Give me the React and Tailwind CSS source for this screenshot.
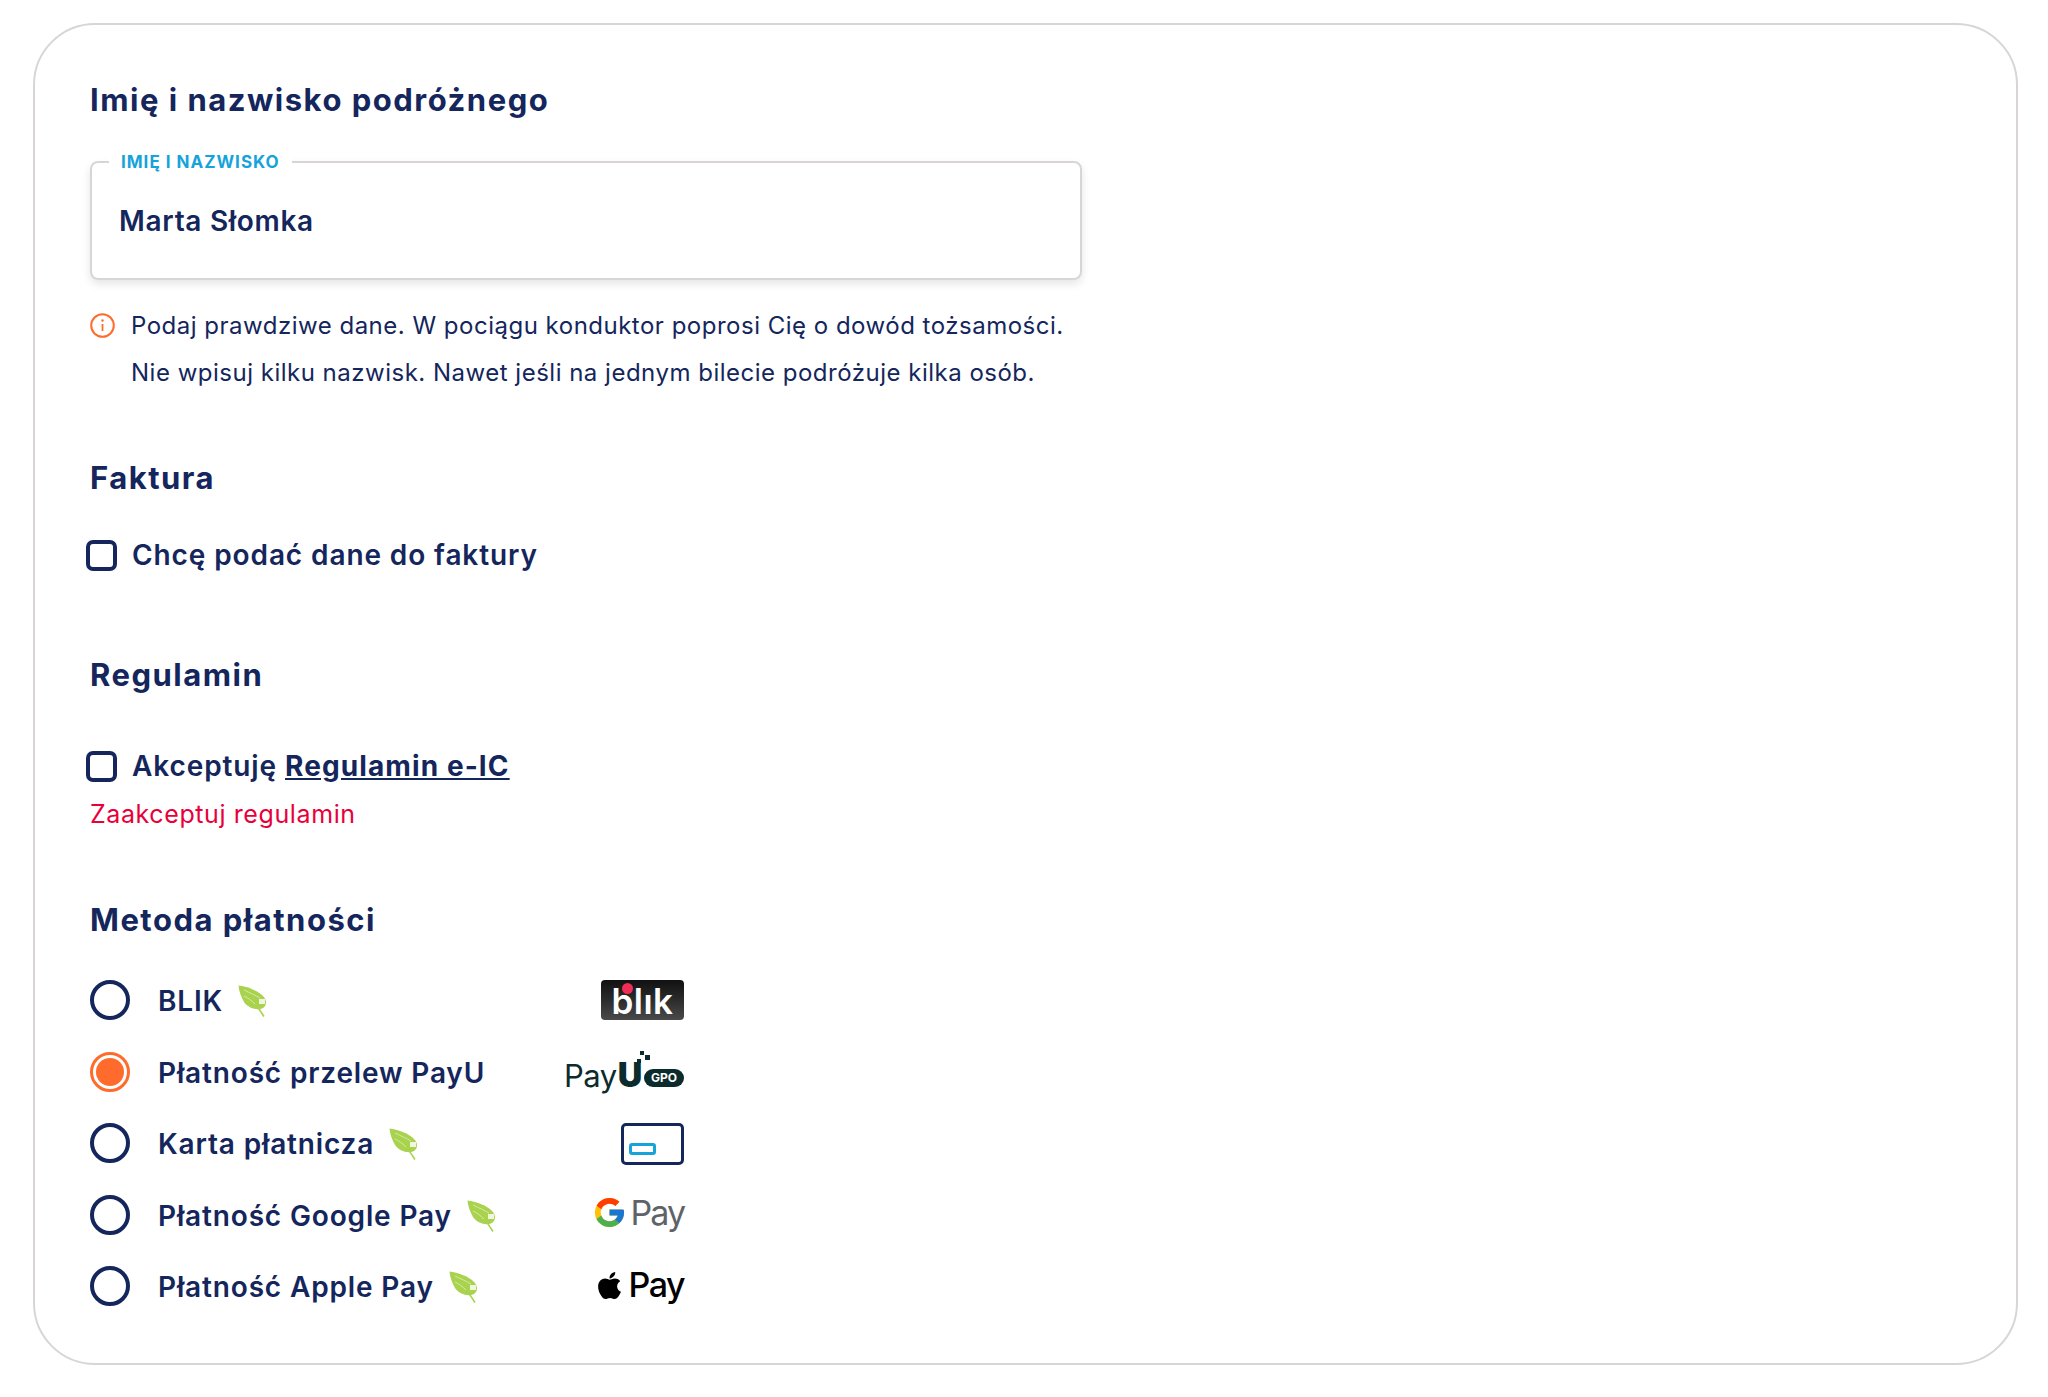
import React from "react";
import { FcGoogle } from "react-icons/fc";
import { FaApple } from "react-icons/fa";

const Leaf = () => (
  <svg width="29" height="32" viewBox="0 0 29 32" className="shrink-0">
    <path d="M0.5 0.5 C9 1.5 19 5 25 11 C29 15 29 20 25 23 C19 26 10 23 6 17 C3 12 1 6 0.5 0.5Z" fill="#a9d24f" />
    <path d="M2 2 C9 9 17 17 26 31.5" fill="none" stroke="#a9d24f" strokeWidth="1.6" />
    <path d="M6 5 C12 8 17 10 22 13 M6 11 C10 13 13 15 17 19" fill="none" stroke="#d6e99f" strokeWidth="1" />
    <path d="M21 14 h6 v5 h-6z" fill="#f1f7df" />
  </svg>
);

const InfoIcon = () => (
  <svg width="25" height="25" viewBox="0 0 25 25" className="shrink-0 text-[#ff6b2c]">
    <circle cx="12.5" cy="12.5" r="11.3" fill="none" stroke="currentColor" strokeWidth="2" />
    <path d="M12.5 11v7" stroke="currentColor" strokeWidth="1.8" />
    <circle cx="12.5" cy="7.5" r="1.2" fill="currentColor" />
  </svg>
);

const Checkbox = () => (
  <span className="w-[31px] h-[31px] border-4 border-[#14265c] rounded-[7px] shrink-0" />
);

const BlikLogo = () => (
  <div className="relative w-[83px] h-[40px] rounded-[4px] bg-gradient-to-b from-[#111111] to-[#4a4a4a] flex items-center justify-center">
    <span className="font-['Inter',sans-serif] text-[35px] leading-[38px] font-semibold text-white tracking-[0.5px] translate-y-[1px]">blık</span>
    <span className="absolute left-[21px] top-[3px] w-[11px] h-[11px] rounded-full bg-[#ee2e56]" />
  </div>
);

const PayuLogo = () => (
  <div className="relative w-[122px] h-[44px] flex items-end font-['Inter',sans-serif] text-[#0c2b2c]">
    <span className="ml-[2px] text-[31px] leading-[36px] font-normal tracking-[-0.5px]">Pay</span>
    <span className="text-[34px] leading-[38px] font-black ml-[1px]">U</span>
    <span className="absolute right-0 bottom-[7px] w-[40px] h-[18px] rounded-full bg-[#0c2b2c] text-white text-[12px] leading-[18px] font-bold text-center">GPO</span>
    <span className="absolute left-[78px] top-[1px] w-[4px] h-[4px] bg-[#0c2b2c]" />
    <span className="absolute left-[83px] top-[5px] w-[5px] h-[5px] bg-[#0c2b2c]" />
    <span className="absolute left-[75px] top-[9px] w-[4px] h-[4px] bg-[#0c2b2c]" />
  </div>
);

const CardLogo = () => (
  <div className="w-[63px] h-[42px] border-[3px] border-[#14265c] rounded-[5px] flex items-end pl-[5px] pb-[7px] translate-y-[1px]">
    <span className="w-[27px] h-[12px] border-[3px] border-[#16a3dc] rounded-[3px]" />
  </div>
);

const GooglePayLogo = () => (
  <div className="flex items-center gap-[4px] font-['Inter',sans-serif] -translate-y-[2px]">
    <FcGoogle size={35} />
    <span className="text-[34px] leading-[36px] tracking-[-2px] text-[#5f6368]">Pay</span>
  </div>
);

const ApplePayLogo = () => (
  <div className="flex items-center gap-[4px] font-['Inter',sans-serif] text-black -translate-y-[1px]">
    <FaApple size={31} />
    <span className="text-[34px] leading-[36px] font-medium tracking-[-1.5px]">Pay</span>
  </div>
);

const methods = [
  { name: "BLIK", leaf: true, logo: <BlikLogo /> },
  { name: "Płatność przelew PayU", selected: true, logo: <PayuLogo /> },
  { name: "Karta płatnicza", leaf: true, logo: <CardLogo /> },
  { name: "Płatność Google Pay", leaf: true, logo: <GooglePayLogo /> },
  { name: "Płatność Apple Pay", leaf: true, logo: <ApplePayLogo /> },
];

const Heading = ({ className, children }) => (
  <h2 className={`text-[31px] leading-[40px] font-bold text-[#14265c] tracking-[1.5px] ${className}`}>{children}</h2>
);

export default function App() {
  return (
    <div className="min-h-[1397px] bg-white pt-[23px] pl-[33px] font-['Inter',sans-serif] text-[#14265c]">
      <div className="w-[1985px] h-[1342px] border-2 border-[#d9d5d6] rounded-[62px] pt-[55px] pl-[55px]">
        <Heading>Imię i nazwisko podróżnego</Heading>

        {/* Name input */}
        <div className="relative mt-[41px] w-[992px] h-[119px] border-2 border-[#d9d5d6] rounded-[8px] shadow-[0_4px_8px_rgba(0,0,0,0.1)] flex items-center pl-[27px]">
          <span className="absolute left-[17px] -top-[12px] bg-white px-[12px] text-[17px] leading-[22px] font-bold tracking-[1px] text-[#16a3dc]">
            IMIĘ I NAZWISKO
          </span>
          <span className="text-[28px] leading-[36px] font-semibold tracking-[0.7px]">Marta Słomka</span>
        </div>

        {/* Info */}
        <div className="mt-[22px] w-[1040px] text-[24px] leading-[47px] tracking-[0.5px]">
          <div className="flex items-center gap-[16px]">
            <InfoIcon />
            <span>Podaj prawdziwe dane. W pociągu konduktor poprosi Cię o dowód tożsamości.</span>
          </div>
          <div className="pl-[41px]">Nie wpisuj kilku nazwisk. Nawet jeśli na jednym bilecie podróżuje kilka osób.</div>
        </div>

        <Heading className="mt-[62px]">Faktura</Heading>
        <label className="mt-[37px] -ml-[4px] h-[40px] flex items-center gap-[15px] text-[28px] font-semibold tracking-[0.9px]">
          <Checkbox />
          <span>Chcę podać dane do faktury</span>
        </label>

        <Heading className="mt-[80px]">Regulamin</Heading>
        <label className="mt-[51px] -ml-[4px] h-[40px] flex items-center gap-[15px] text-[28px] font-semibold tracking-[0.9px]">
          <Checkbox />
          <span>
            Akceptuję <a className="font-bold underline tracking-[1.1px]">Regulamin e-IC</a>
          </span>
        </label>
        <p className="mt-[12px] text-[25px] leading-[32px] tracking-[0.6px] text-[#e8003a]">Zaakceptuj regulamin</p>

        <Heading className="mt-[70px]">Metoda płatności</Heading>
        <div className="mt-[40px] w-[594px] flex flex-col gap-[31.6px]">
          {methods.map((m) => (
            <div key={m.name} className="h-[40px] flex items-center justify-between">
              <div className="flex items-center gap-[28px]">
                {m.selected ? (
                  <span className="w-[40px] h-[40px] rounded-full border-[3px] border-[#ff6b2c] p-[3px] shrink-0">
                    <span className="block w-full h-full rounded-full bg-[#ff6b2c]" />
                  </span>
                ) : (
                  <span className="w-[40px] h-[40px] rounded-full border-4 border-[#14265c] shrink-0" />
                )}
                <div className="flex items-center gap-[15px] text-[28px] font-semibold tracking-[0.85px] translate-y-[1px]">
                  <span>{m.name}</span>
                  {m.leaf && <Leaf />}
                </div>
              </div>
              {m.logo}
            </div>
          ))}
        </div>
      </div>
    </div>
  );
}
